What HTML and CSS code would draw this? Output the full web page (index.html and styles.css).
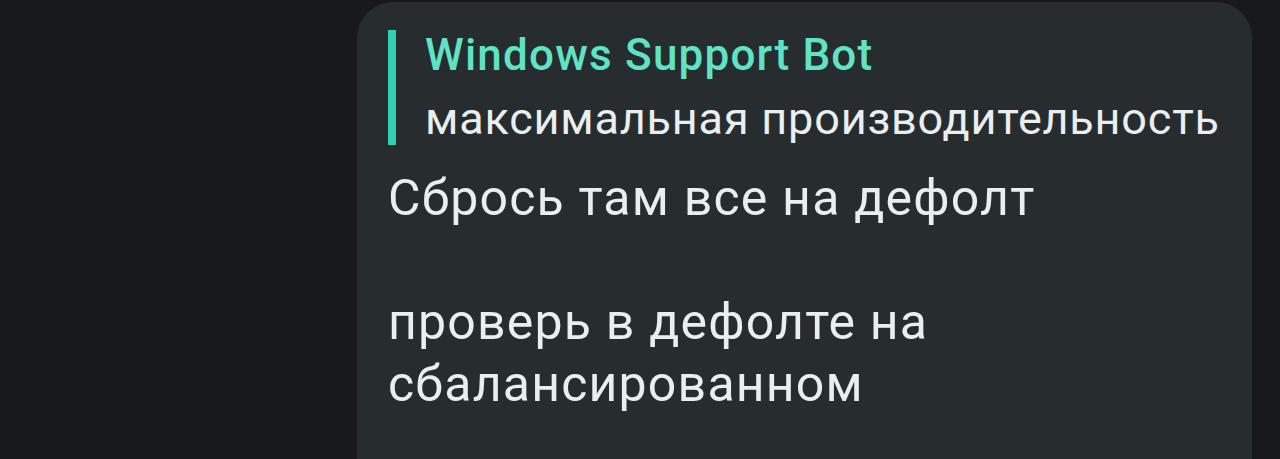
FILE: index.html
```html
<!DOCTYPE html>
<html>
<head>
  <title>Message</title>
  <link rel="stylesheet" href="styles.css">
</head>
<body>
  <div class="chat">
    <div class="bubble">
      <div class="reply">
        <div class="reply-name">Windows Support Bot</div>
        <div class="reply-text">максимальная производительность</div>
      </div>
      <div class="message">Сбрось там все на дефолт<br><br>проверь в дефолте на<br>сбалансированном</div>
    </div>
  </div>
</body>
</html>
```

FILE: styles.css
```css
body { margin: 0; background-color: #17191b; font-family: Roboto, "Noto Sans", sans-serif; overflow: hidden; }
.chat { height: 459px; padding-top: 2px; padding-left: 357px; box-sizing: border-box; overflow: hidden; }
.bubble { width: 895px; height: 520px; background-color: #272c2f; border-radius: 36px 36px 0 0; padding: 28px 31px 0; box-sizing: border-box; }
.reply { border-left: 8px solid #35cfb1; padding-left: 29px; }
.reply-name { font-size: 44px; line-height: 50px; font-weight: 500; letter-spacing: 1.2px; color: #5ee3c4; }
.reply-text { font-size: 45px; line-height: 52px; margin-top: 13px; letter-spacing: 0.8px; color: #e9eef1; }
.message { margin-top: 22px; font-size: 50px; line-height: 62px; letter-spacing: 1.2px; color: #e9eef1; }
```
